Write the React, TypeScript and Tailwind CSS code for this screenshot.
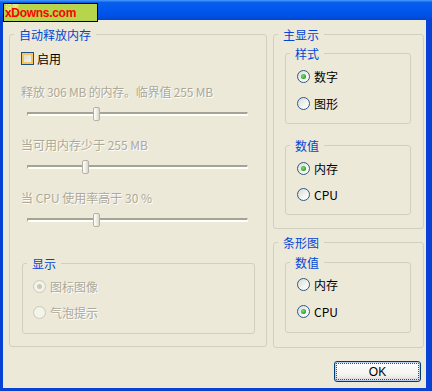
import type { ReactNode } from 'react';

const font = 'font-["Noto_Sans_CJK_SC","Liberation_Sans",sans-serif]';
const dim = 'text-[#aca899] [text-shadow:1px_1px_0_#ffffff]';

function Group({ title, className, children }: { title: string; className?: string; children: ReactNode }) {
  return (
    <fieldset className={'border border-[#d0d0bf] rounded-[3px] ' + (className || '')}>
      <legend className="ml-[4px] px-[5px] text-[12px] leading-[13px] text-[#0046d5]">{title}</legend>
      {children}
    </fieldset>
  );
}

function Radio({ label, checked, disabled }: { label: string; checked?: boolean; disabled?: boolean }) {
  return (
    <div className="flex items-center gap-[4px] h-[13px]">
      <div
        className={
          'w-[13px] h-[13px] rounded-full border flex items-center justify-center ' +
          (disabled
            ? 'border-[#cac8bb] bg-[#f4f3ea]'
            : 'border-[#2c5a8a] bg-[linear-gradient(135deg,#dcdcd5_0%,#f4f4f0_60%,#ffffff_100%)]')
        }
      >
        {checked && (
          <div
            className={
              'w-[5px] h-[5px] rounded-full ' +
              (disabled ? 'bg-[#cac8bb]' : 'bg-[radial-gradient(circle_at_40%_40%,#7fe07a_0%,#21a121_70%,#118f0e_100%)]')
            }
          />
        )}
      </div>
      <span className={'text-[12px] leading-[14px] ' + (disabled ? dim : 'text-black')}>{label}</span>
    </div>
  );
}

function Slider({ pos }: { pos: number }) {
  return (
    <div className="relative ml-[6px] w-[221px] h-[14px] flex items-center">
      <div className="w-full h-[4px] rounded-[1px] border-t-2 border-l border-[#a5a392] border-b border-r border-b-white border-r-white bg-white" />
      <div
        className="absolute top-0 w-[7px] h-[14px] rounded-[2px] border border-[#b4b2a4] bg-[linear-gradient(to_right,#ffffff,#ecebe3_60%,#d8d6c8)]"
        style={{ left: pos }}
      />
    </div>
  );
}

export default function App() {
  return (
    <div className={'w-[432px] h-[391px] flex flex-col bg-[#0841d6] ' + font}>
      <div className="relative h-[20px] shrink-0 bg-[linear-gradient(to_bottom,#4a9cff_0%,#0a5fea_12%,#0058ee_45%,#0052e6_75%,#0046d2_100%)]">
        <div className="absolute left-[3px] top-[3px] w-[95px] h-[19px] border border-black bg-[#b6d44c]">
          <span className="absolute left-[1px] top-0 text-[7px] leading-[7px] font-bold text-[#f4f08a]">设置</span>
          <span className='absolute left-[1px] top-[4px] font-["Liberation_Sans",sans-serif] text-[12px] leading-[11px] font-bold text-[#ff0000] tracking-[-0.3px]'>
            xDowns.com
          </span>
        </div>
      </div>

      <div className="flex-1 ml-[3px] mr-[6px] mb-[3px] bg-[#ece9d8] pt-[8px] pl-[6px] flex flex-col">
        <div className="flex gap-[6px] items-start">
          <Group title="自动释放内存" className="w-[258px] pb-[12px]">
            <div className="pl-[11px]">
              <div className="mt-[11px] flex items-center gap-[3px] h-[13px]">
                <div className="w-[13px] h-[13px] border border-[#1c5180] bg-[#f7c45d] p-[2px]">
                  <div className="w-full h-full bg-[linear-gradient(135deg,#dcdbd2,#f2f1ec)]" />
                </div>
                <span className="text-[12px] leading-[14px] text-black">启用</span>
              </div>
              <div className={'mt-[20px] text-[12px] leading-[14px] tracking-[-0.2px] ' + dim}>释放 306 MB 的内存。临界值 255 MB</div>
              <div className="mt-[8px]">
                <Slider pos={66} />
              </div>
              <div className={'mt-[17px] text-[12px] leading-[14px] ' + dim}>当可用内存少于 255 MB</div>
              <div className="mt-[8px]">
                <Slider pos={55} />
              </div>
              <div className={'mt-[17px] text-[12px] leading-[14px] ' + dim}>当 CPU 使用率高于 30 %</div>
              <div className="mt-[8px]">
                <Slider pos={66} />
              </div>
            </div>
            <Group title="显示" className="mt-[30px] ml-[12px] w-[233px] pb-[14px]">
              <div className="pl-[10px] mt-[10px] flex flex-col gap-[13px]">
                <Radio label="图标图像" checked disabled />
                <Radio label="气泡提示" disabled />
              </div>
            </Group>
          </Group>

          <div className="w-[151px] flex flex-col gap-[7px]">
            <Group title="主显示" className="pb-[13px]">
              <Group title="样式" className="mt-[6px] ml-[11px] w-[126px] pb-[13px]">
                <div className="pl-[11px] mt-[10px] flex flex-col gap-[14px]">
                  <Radio label="数字" checked />
                  <Radio label="图形" />
                </div>
              </Group>
              <Group title="数值" className="mt-[15px] ml-[11px] w-[126px] pb-[13px]">
                <div className="pl-[11px] mt-[10px] flex flex-col gap-[13px]">
                  <Radio label="内存" checked />
                  <Radio label="CPU" />
                </div>
              </Group>
            </Group>
            <Group title="条形图" className="pb-[14px]">
              <Group title="数值" className="mt-[7px] ml-[11px] w-[126px] pb-[14px]">
                <div className="pl-[11px] mt-[9px] flex flex-col gap-[14px]">
                  <Radio label="内存" />
                  <Radio label="CPU" checked />
                </div>
              </Group>
            </Group>
          </div>
        </div>

        <div className="flex justify-end mt-[13px] pr-[5px]">
          <button className="w-[87px] h-[21px] rounded-[3px] border border-[#003c74] bg-[linear-gradient(to_bottom,#ffffff_0%,#f3f3ee_70%,#d9d4c9_100%)] p-[1px] shadow-[inset_0_0_0_1px_#b7cdf4]">
            <div className='w-full h-full border border-dotted border-[#3a4a6a] flex items-center justify-center font-["Liberation_Sans",sans-serif] text-[12px] leading-[14px] text-black'>
              OK
            </div>
          </button>
        </div>
      </div>
    </div>
  );
}
